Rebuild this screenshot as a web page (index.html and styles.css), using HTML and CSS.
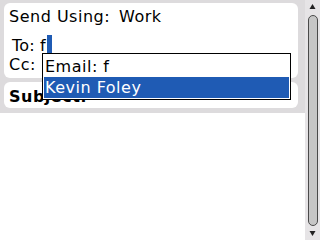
FILE: index.html
```html
<!DOCTYPE html>
<html>
<head>
<meta charset="utf-8">
<title>Compose</title>
<link rel="stylesheet" href="styles.css">
</head>
<body>
<div class="screen">
    <div class="main">
        <div class="head">
            <div class="panel fields">
                <div class="row send"><span class="label">Send Using:</span><span class="value">Work</span></div>
                <div class="row to">To: f<span class="caret"></span></div>
                <div class="row cc">Cc:</div>
            </div>
            <div class="panel subject">Subject:</div>
            <ul class="suggest">
                <li class="first">Email: f</li>
                <li class="on">Kevin Foley</li>
            </ul>
        </div>
    </div>
    <div class="scroll">
        <svg class="arr" width="15" height="11" viewBox="0 0 15 11"><polygon points="7.5,4 10.5,9 4.5,9" fill="#222"/></svg>
        <div class="thumb"></div>
        <svg class="arr" width="15" height="14" viewBox="0 0 15 14"><polygon points="4.5,5 10.5,5 7.5,10" fill="#222"/></svg>
    </div>
</div>
</body>
</html>
```

FILE: styles.css
```css
*{margin:0;padding:0;}
html,body{width:320px;height:240px;overflow:hidden;background:#fff;}
body{font-family:"DejaVu Sans",sans-serif;font-size:16px;letter-spacing:0.5px;color:#000;}
.screen{display:flex;width:320px;height:240px;}
.main{flex:1;}
.head{position:relative;background:#dddbdd;padding:3px 7px 5px 4px;}
.panel{background:#fff;border-radius:6px;}
.fields{padding:4px 0 3px 5px;height:68px;}
.row{height:20px;line-height:20px;white-space:nowrap;}
.send .value{margin-left:9px;}
.to{margin-top:8px;padding-left:3px;letter-spacing:0.2px;}
.caret{display:inline-block;width:5px;height:19px;background:#1f5bb4;vertical-align:-3px;margin-left:1px;}
.subject{margin-top:4px;height:20px;line-height:20px;padding:5px 0 1px 5px;font-weight:bold;}
.suggest{list-style:none;position:absolute;left:42px;top:53px;width:245px;border:1px solid #000;padding:1px;background:#fff;}
.suggest li{height:21px;line-height:21px;padding-left:1px;}
.suggest li.first{height:20px;line-height:20px;padding-top:2px;}
.suggest li.on{background:#1f5bb4;color:#fff;}
.scroll{width:15px;background:#e6e4e6;display:flex;flex-direction:column;align-items:center;}
.arr{display:block;}
.thumb{flex:1;width:8px;margin:4px 0 0 1px;border:1px solid #4a4a4a;border-radius:5px;background:#c6c6c6;}
```
